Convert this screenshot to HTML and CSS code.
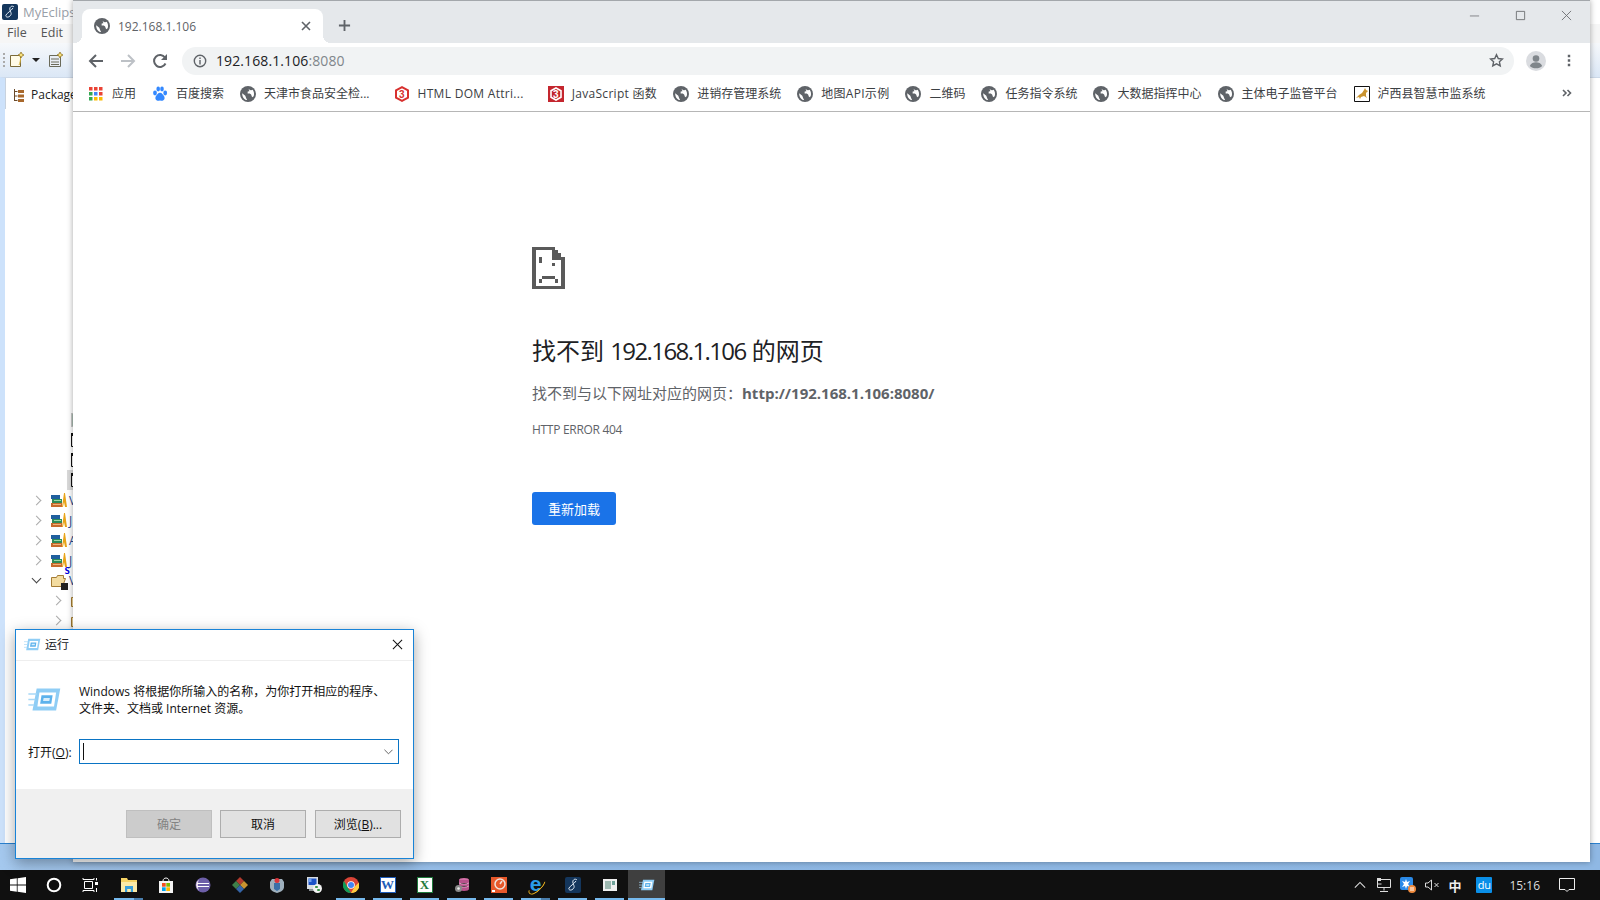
FILE: index.html
```html
<!DOCTYPE html>
<html lang="zh-CN">
  <head>
    <meta charset="UTF-8" />
    <title>192.168.1.106</title>
    <link rel="stylesheet" href="styles.css">
  </head>
  <body>
    <svg class="sprite" xmlns="http://www.w3.org/2000/svg">
      <symbol id="globe" viewBox="0 0 16 16">
        <circle cx="8" cy="8" r="8" fill="#5f6368"/>
        <path fill="#fff" d="M2.200 7.200L5.300 9.800l.9 2.500.9 1.800C4.300 13.800 2 10.800 2.200 7.200zM8.600 2.800c.8.900 1.100 1.500 2.600 1.400l1.500-.5c1.300 1.700 1.700 4 1 6.600l-1.600.9-1-2.800-1.300-.9H7.600l.1-1.900 1.700-.4z"/>
      </symbol>
      <symbol id="books" viewBox="0 0 16 16">
        <path fill="#c96a2c" d="M0 11h11v4H0z"/>
        <path fill="#f0b27a" d="M2 12h8v1H2z"/>
        <path fill="#2e8b57" d="M1 7h10v4H1z"/>
        <path fill="#9fd8a8" d="M3 8h7v1H3z"/>
        <path fill="#1f5f9e" d="M0 3h9v4H0z"/>
        <path fill="#e8a317" d="M11 15l2-14 1 0 2 14h-2l-1-5-1 5z"/>
      </symbol>
      <symbol id="folder" viewBox="0 0 16 16">
        <path fill="#f3dca0" stroke="#a57c34" d="M.5 5.500h5l1-2h6v3h2l-3 8h-11z"/>
      </symbol>
      <symbol id="file-dark" viewBox="0 0 10 16">
        <path fill="#fff" stroke="#111" d="M.5 1.500h9v13h-9z"/>
        <path fill="#111" d="M0 1h10v3H0zM2 6h2v2H2zM5 6h3v2H5zM2 9h2v2H2zM5 9h3v2H5zM2 12h2v2H2zM5 12h3v2H5z"/>
      </symbol>
      <symbol id="run-app" viewBox="0 0 24 18">
        <path fill="#8fcdf5" d="M6 1h17l-3 16H3z"/>
        <path fill="#fff" d="M8 4h12l-1.500 10H6.500z"/>
        <path fill="#5cb2ec" d="M9.500 6h8l-1 6h-8z"/>
        <path fill="#d8eefc" d="M11 8h4.500l-.4 2h-4.500z"/>
        <path stroke="#a8d8f6" d="M0 5h6M0 9h5M0 13h4"/>
      </symbol>
    </svg>

    <div class="desktop">
      <div class="window-eclipse">
        <div class="eclipse-title">
          <svg class="logo-myeclipse" viewBox="0 0 16 16"><rect width="16" height="16" rx="2" fill="#14365c"/><path fill="none" stroke="#dfe9f4" d="M12 3c-2-2-5 0-4 3s2 4 0 6-5 1-4-1 5-4 7-7"/></svg>
          <span>MyEclips</span>
        </div>
        <div class="eclipse-menu"><span>File</span><span>Edit</span></div>
        <div class="eclipse-toolbar">
          <span class="grip"></span>
          <svg class="tool-icon" viewBox="0 0 16 16"><path fill="#fffbe8" stroke="#7a6a3a" d="M1.500 3.500h10v11h-10z"/><path fill="none" stroke="#d8b23a" d="M10 13c1-2 1.500-4 1.500-7"/><path fill="#f8e27a" stroke="#8a6a1a" stroke-width=".7" d="M12 0l1 2 2 1-2 1-1 2-1-2-2-1 2-1z"/></svg>
          <span class="drop-arrow"></span>
          <svg class="tool-icon" viewBox="0 0 16 16"><path fill="#e9eef5" stroke="#6a6a5a" d="M1.500 3.500h11v11h-11z"/><path stroke="#6a6a5a" d="M3 7h8M3 10h8M3 12.500h8"/><path fill="#f8e27a" stroke="#8a6a1a" stroke-width=".7" d="M12 0l1 2 2 1-2 1-1 2-1-2-2-1 2-1z"/></svg>
        </div>
        <div class="explorer">
          <div class="explorer-tab">
            <svg class="tab-icon" viewBox="0 0 14 14"><path fill="none" stroke="#6a4a2a" d="M2.500 1v12M2.500 3.500h3M2.500 8h3M2.500 12.500h3"/><path fill="#a8682c" d="M6 2h6v3H6zM6 6.500h6v3H6zM6 11h6v3H6z"/></svg>
            <span>Package</span>
          </div>
          <ul class="tree">
            <li class="row"><span class="leaf-box"></span></li>
            <li class="row"><svg class="leaf-file" viewBox="0 0 10 16"><use href="#file-dark"/></svg></li>
            <li class="row"><svg class="leaf-file" viewBox="0 0 10 16"><use href="#file-dark"/></svg></li>
            <li class="row selected"><svg class="leaf-file" viewBox="0 0 10 16"><use href="#file-dark"/></svg></li>
            <li class="row top"><span class="chev"></span><svg class="tree-icon"><use href="#books"/></svg><span class="label">V</span></li>
            <li class="row top"><span class="chev"></span><svg class="tree-icon"><use href="#books"/></svg><span class="label">J</span></li>
            <li class="row top"><span class="chev"></span><svg class="tree-icon"><use href="#books"/></svg><span class="label">A</span></li>
            <li class="row top"><span class="chev"></span><svg class="tree-icon"><use href="#books"/></svg><span class="label">J</span></li>
            <li class="row top"><span class="chev open"></span>
              <span class="web-icon"><svg class="tree-icon"><use href="#folder"/></svg><b class="s-mark">S</b><i class="dark-mark"></i></span><span class="label">V</span></li>
            <li class="row sub"><span class="chev"></span><svg class="tree-icon"><use href="#folder"/></svg></li>
            <li class="row sub"><span class="chev"></span><svg class="tree-icon"><use href="#folder"/></svg></li>
          </ul>
        </div>
      </div>

      <div class="window-chrome">
        <div class="tabstrip">
          <div class="tab">
            <svg class="fav"><use href="#globe"/></svg>
            <span class="tab-title">192.168.1.106</span>
            <svg class="tab-close" viewBox="0 0 10 10"><path stroke="#5f6368" stroke-width="1.600" d="M1 1l8 8M9 1l-8 8"/></svg>
          </div>
          <svg class="new-tab" viewBox="0 0 14 14"><path stroke="#5f6368" stroke-width="2" d="M7 1v12M1 7h12"/></svg>
          <div class="win-controls">
            <svg viewBox="0 0 12 12"><path stroke="#7d7f82" d="M1 6.500h10"/></svg>
            <svg viewBox="0 0 12 12"><path fill="none" stroke="#6f7174" d="M1.500 1.500h9v9h-9z"/></svg>
            <svg viewBox="0 0 12 12"><path stroke="#6f7174" d="M1 1l10 10M11 1L1 11"/></svg>
          </div>
        </div>
        <div class="toolbar">
          <svg class="nav-btn" viewBox="0 0 16 16"><path fill="none" stroke="#5f6368" stroke-width="2" d="M15 8H2M8 2L2 8l6 6"/></svg>
          <svg class="nav-btn" viewBox="0 0 16 16"><path fill="none" stroke="#bdc1c6" stroke-width="2" d="M1 8h13M8 2l6 6-6 6"/></svg>
          <svg class="nav-btn" viewBox="0 0 16 16"><path fill="none" stroke="#5f6368" stroke-width="2" d="M13.500 10.500A6 6 0 1 1 13 4.500"/><path fill="#5f6368" d="M15 1v6H9z"/></svg>
          <div class="omnibox">
            <svg class="info" viewBox="0 0 14 14"><circle cx="7" cy="7" r="5.700" fill="none" stroke="#5f6368" stroke-width="1.400"/><path fill="#5f6368" d="M6.300 6h1.400v4.500H6.300zM6.300 3.500h1.400v1.400H6.300z"/></svg>
            <span class="url">192.168.1.106<span class="url-port">:8080</span></span>
            <svg class="star" viewBox="0 0 16 16"><path fill="none" stroke="#5f6368" stroke-width="1.500" d="M8 1.800l1.900 4.100 4.500.5-3.300 3 .9 4.400L8 11.600l-4 2.200.9-4.400-3.300-3 4.500-.5z"/></svg>
          </div>
          <svg class="avatar" viewBox="0 0 20 20"><circle cx="10" cy="10" r="10" fill="#dadce0"/><circle cx="10" cy="7.500" r="3.300" fill="#80868b"/><path fill="#80868b" d="M3.800 15c1-2.800 3.800-3.700 6.200-3.700s5.200.9 6.200 3.700c-1.500 1.400-3.700 2.300-6.200 2.300s-4.700-.9-6.200-2.300z"/></svg>
          <svg class="menu-dots" viewBox="0 0 4 16"><path fill="#5f6368" d="M.5 1h3v3h-3zM.5 6.500h3v3h-3zM.5 12h3v3h-3z"/></svg>
        </div>
        <div class="bookmarks">
          <a class="mark">
            <svg class="fav" viewBox="0 0 16 16"><path fill="#ea4335" d="M1 1h3.500v3.500H1zM6 1h3.500v3.500H6zM11 1h3.500v3.500H11zM11 6h3.500v3.500H11z"/><path fill="#34a853" d="M1 6h3.500v3.500H1zM1 11h3.500v3.500H1z"/><path fill="#4285f4" d="M6 6h3.500v3.500H6z"/><path fill="#fbbc04" d="M6 11h3.500v3.500H6zM11 11h3.500v3.500H11z"/></svg>
            应用
          </a>
          <a class="mark">
            <svg class="fav" viewBox="0 0 16 16"><g fill="#3388ff"><ellipse cx="3" cy="7" rx="1.900" ry="2.400"/><ellipse cx="6.200" cy="3" rx="1.800" ry="2.400"/><ellipse cx="10" cy="3" rx="1.800" ry="2.400"/><ellipse cx="13.200" cy="7" rx="1.900" ry="2.400"/><path d="M8 6.800c2 0 3 2 4 3.300 1.200 1.700.6 4.600-1.700 4.600-1 0-1.500-.3-2.300-.3s-1.300.3-2.300.3c-2.300 0-2.900-2.900-1.700-4.600 1-1.300 2-3.300 4-3.300z"/></g></svg>
            百度搜索
          </a>
          <a class="mark elided"><svg class="fav"><use href="#globe"/></svg>天津市食品安全检...</a>
          <a class="mark elided latin">
            <svg class="fav" viewBox="0 0 16 16"><path fill="none" stroke="#d8312f" stroke-width="2" d="M8 1.200l6 3.200v7.200l-6 3.200-6-3.200V4.400z"/><text class="logo-three" x="8" y="11.500" fill="#d8312f">3</text></svg>
            HTML DOM Attri...
          </a>
          <a class="mark latin">
            <svg class="fav" viewBox="0 0 16 16"><path fill="#c4262e" d="M0 0h16v16H0z"/><path fill="none" stroke="#fff" stroke-width="1.600" d="M8 2l5 2.700v6.600L8 14l-5-2.700V4.700z"/><text class="logo-three" x="8" y="11.500" fill="#fff">3</text></svg>
            JavaScript 函数
          </a>
          <a class="mark"><svg class="fav"><use href="#globe"/></svg>进销存管理系统</a>
          <a class="mark latin"><svg class="fav"><use href="#globe"/></svg>地图API示例</a>
          <a class="mark"><svg class="fav"><use href="#globe"/></svg>二维码</a>
          <a class="mark"><svg class="fav"><use href="#globe"/></svg>任务指令系统</a>
          <a class="mark"><svg class="fav"><use href="#globe"/></svg>大数据指挥中心</a>
          <a class="mark"><svg class="fav"><use href="#globe"/></svg>主体电子监管平台</a>
          <a class="mark">
            <svg class="fav" viewBox="0 0 16 16"><path fill="#fff" stroke="#111" d="M.5.500h15v15H.5z"/><path fill="#c9932f" d="M2 12l3-3 3-2 2-3 1-2 1 2 2 1-2 2 0 3 1 2-3-2-3 1-1 2-1-2z"/></svg>
            泸西县智慧市监系统
          </a>
          <svg class="more-marks" viewBox="0 0 10 8"><path fill="none" stroke="#5f6368" stroke-width="1.600" d="M1 1l3 3-3 3M5.500 1l3 3-3 3"/></svg>
        </div>
        <div class="page">
          <div class="error-box">
            <svg class="sad-page" viewBox="0 0 30 39" shape-rendering="crispEdges">
              <path fill="#5a5a5a" fill-rule="evenodd" d="M0 0h21v3h3v3h3v3h3v30H0zM3 3v33h24V12h-9V3z"/>
              <path fill="#5a5a5a" d="M6 9h3v6H6zM18 15h3v3h-3zM9 27h12v3H9zM6 30h3v3H6zM21 30h3v3h-3z"/>
            </svg>
            <h1>找不到 <span class="h1-host">192.168.1.106</span> 的网页</h1>
            <p class="error-desc">找不到与以下网址对应的网页：<strong>http://192.168.1.106:8080/</strong></p>
            <p class="error-code">HTTP ERROR 404</p>
            <button class="reload">重新加载</button>
          </div>
        </div>
      </div>

      <div class="dialog">
        <div class="dialog-title">
          <svg class="dialog-icon"><use href="#run-app"/></svg>
          <span>运行</span>
          <svg class="dialog-close" viewBox="0 0 12 12"><path stroke="#111" stroke-width="1.100" d="M1 1l10 10M11 1L1 11"/></svg>
        </div>
        <div class="dialog-body">
          <div class="dialog-msg">
            <svg class="dialog-art"><use href="#run-app"/></svg>
            <p>Windows 将根据你所输入的名称，为你打开相应的程序、<br>文件夹、文档或 Internet 资源。</p>
          </div>
          <div class="open-row">
            <label>打开(<u>O</u>):</label>
            <div class="open-input">
              <span class="caret"></span>
              <svg class="combo-arrow" viewBox="0 0 10 6"><path fill="none" stroke="#555" d="M.5.500L5 5 9.500.5"/></svg>
            </div>
          </div>
        </div>
        <div class="dialog-foot">
          <button class="win-btn" disabled>确定</button>
          <button class="win-btn">取消</button>
          <button class="win-btn browse">浏览(<u>B</u>)...</button>
        </div>
      </div>
    </div>

    <div class="taskbar">
      <div class="sys-btn">
        <svg viewBox="0 0 16 16"><path fill="#fff" d="M0 2.300l6.800-1v6.200H0zM7.600 1.200L16 0v7.500H7.600zM0 8.400h6.800v6.300L0 13.700zM7.600 8.400H16V16l-8.400-1.200z"/></svg>
      </div>
      <div class="sys-btn">
        <svg viewBox="0 0 16 16"><circle cx="8" cy="8" r="6.300" fill="none" stroke="#fff" stroke-width="2"/></svg>
      </div>
      <div class="sys-btn">
        <svg viewBox="0 0 16 16"><path fill="none" stroke="#fff" d="M1 1v1.500h11V1M2.500 4.500h8v7h-8zM1 15v-1.500h11V15M14.500 1v2.500M14.500 11v4"/><path fill="#fff" d="M13 5h3v3h-3z"/></svg>
      </div>
      <div class="task-gap"></div>
      <div class="app running stacked">
        <svg viewBox="0 0 16 16"><path fill="#f6d365" d="M0 1h6l1 2h9v12H0z"/><path fill="#fbeaa8" d="M0 5h16v10H0z"/><path fill="#3aa0dc" d="M4 9h8v6H9.800v-3H6.200v3H4z"/></svg>
      </div>
      <div class="app">
        <svg viewBox="0 0 16 16"><path fill="#f4f4f4" d="M1 4h14v12H1z"/><path fill="none" stroke="#f4f4f4" d="M5 4c0-4 6-4 6 0"/><path fill="#f25022" d="M4 6h3.700v3.700H4z"/><path fill="#7fba00" d="M8.300 6H12v3.700H8.300z"/><path fill="#00a4ef" d="M4 10.300h3.700V14H4z"/><path fill="#ffb900" d="M8.300 10.300H12V14H8.300z"/></svg>
      </div>
      <div class="app">
        <svg viewBox="0 0 16 16"><circle cx="8" cy="8" r="7.500" fill="#6d5fa8"/><path fill="#e8d8ea" d="M1 8a7 7 0 0 1 3-5.500A9 9 0 0 0 3 8a9 9 0 0 0 1 5.500A7 7 0 0 1 1 8z"/><path stroke="#fff" d="M2 6.500h12M2 9.500h12"/></svg>
      </div>
      <div class="app">
        <svg viewBox="0 0 16 16"><path fill="#b23a2e" d="M8 0l4 4-4 4-4-4z"/><path fill="#c9932f" d="M12 4l4 4-4 4-4-4z"/><path fill="#3f7f4a" d="M4 4l4 4-4 4-4-4z"/><path fill="#3565a8" d="M8 8l4 4-4 4-4-4z"/></svg>
      </div>
      <div class="app">
        <svg viewBox="0 0 16 16"><path fill="#9fb0bd" d="M3 2h10l2 3v5c0 3-3 5-7 6-4-1-7-3-7-6V5z"/><path fill="#3a6fa8" d="M5 6h6v6l-3 2-3-2z"/><circle cx="8" cy="3.500" r="2.500" fill="#d8343a"/></svg>
      </div>
      <div class="app">
        <svg viewBox="0 0 16 16"><path fill="#d8dde2" d="M1 0h11v12H1z"/><path fill="#1c52c8" d="M2.500 1.500h8V8h-8z"/><path fill="#6fa0f0" d="M2.500 1.500h3V5h-3z"/><path fill="#8a8f94" d="M3 12h7v2H3z"/><circle cx="11.500" cy="11.500" r="4.500" fill="#f3f3f3"/><path stroke="#2c8c3c" stroke-width="1.400" d="M9 10h2M12 13h2M11 9v2M12 12v2"/></svg>
      </div>
      <div class="app running">
        <svg viewBox="0 0 16 16"><circle cx="8" cy="8" r="8" fill="#db4437"/><path fill="#0f9d58" d="M8 16a8 8 0 0 1-7-12l4 7 3 5z"/><path fill="#ffcd40" d="M8 16l3.700-6.500L16 5.500A8 8 0 0 1 8 16z"/><circle cx="8" cy="8" r="3.800" fill="#fff"/><circle cx="8" cy="8" r="3" fill="#4285f4"/></svg>
      </div>
      <div class="app running">
        <span class="doc-word">W</span>
      </div>
      <div class="app running">
        <span class="doc-excel">X</span>
      </div>
      <div class="app running">
        <svg viewBox="0 0 16 16"><ellipse cx="10" cy="3" rx="5" ry="2" fill="#d46fa8"/><path fill="#b8528c" d="M5 3h10v9c0 1-2 2-5 2s-5-1-5-2z"/><path stroke="#e8a8cc" d="M5 6c2 1.500 8 1.500 10 0M5 9c2 1.500 8 1.500 10 0"/><circle cx="4.500" cy="11.500" r="3.500" fill="#8a8a8a"/><circle cx="4.500" cy="11.500" r="1.300" fill="#eee"/></svg>
      </div>
      <div class="app running">
        <svg viewBox="0 0 16 16"><path fill="#e8582a" d="M0 0h16v16H0z"/><circle cx="9" cy="7" r="5" fill="none" stroke="#f0e4de" stroke-width="1.500"/><path stroke="#f0e4de" stroke-width="1.500" d="M9 7l2-3"/><path fill="#fff" d="M1 13h3v2H1z"/></svg>
      </div>
      <div class="app running stacked">
        <span class="logo-ie">e</span>
      </div>
      <div class="app running">
        <svg viewBox="0 0 16 16"><rect width="16" height="16" rx="2" fill="#14365c"/><path fill="none" stroke="#dfe9f4" d="M12 3c-2-2-5 0-4 3s2 4 0 6-5 1-4-1 5-4 7-7"/></svg>
      </div>
      <div class="app running">
        <svg viewBox="0 0 16 16"><path fill="#f0f0f0" d="M1 2h14v12H1z"/><path fill="#9db8b0" d="M3 4h6v8H3z"/><path fill="#6fa39a" d="M10 4h3v4h-3z"/></svg>
      </div>
      <div class="app running active">
        <svg><use href="#run-app"/></svg>
      </div>
      <div class="tray">
        <svg class="tray-icon" viewBox="0 0 14 14"><path fill="none" stroke="#ddd" stroke-width="1.300" d="M1 10l6-6 6 6"/></svg>
        <svg class="tray-icon wide" viewBox="0 0 16 16"><path fill="none" stroke="#ddd" d="M1.500 2.500h13v8h-13zM8 10.500v3M4 14.500h8M1.500 7h4"/><path fill="#ddd" d="M1 1h4v3H1z"/></svg>
        <svg class="tray-icon wide" viewBox="0 0 16 16"><rect width="13" height="13" rx="2" fill="#2a8ae8"/><path fill="#fff" d="M6 2l1 3 3-1-2 3 2 3-3-1-1 3-1-3-3 1 2-3-2-3 3 1z"/><circle cx="12" cy="12" r="4" fill="#f08a3c"/><path stroke="#fff" d="M10 11h4M10 13h4"/></svg>
        <svg class="tray-icon wide" viewBox="0 0 16 16"><path fill="none" stroke="#ddd" d="M1.500 6v4h2.500l3.500 3V3L4 6zM10.500 6l4 4M14.500 6l-4 4"/></svg>
        <span class="tray-text ime">中</span>
        <span class="du">du</span>
        <span class="clock">15:16</span>
        <svg class="notify" viewBox="0 0 16 16"><path fill="none" stroke="#eee" d="M.5 1.500h15v11H10L8 14.500 6 12.500H.5z"/></svg>
      </div>
    </div>
  </body>
</html>
```

FILE: styles.css
```css
* {
  box-sizing: border-box;
}
body {
  margin: 0;
  width: 1600px;
  height: 900px;
  overflow: hidden;
  display: flex;
  flex-direction: column;
  font-family: "Open Sans", "Noto Sans CJK SC", sans-serif;
  font-size: 12px;
  color: #202124;
}
svg {
  flex-shrink: 0;
  display: block;
}
.sprite {
  display: none;
}

/* desktop + windows */
.desktop {
  position: relative;
  flex: 1;
  background: linear-gradient(90deg, #a5c9ef, #8db6e2 40%, #8fb8e4);
}
.window-eclipse {
  position: absolute;
  left: 0;
  top: 0;
  width: 1600px;
  height: 844px;
  display: flex;
  flex-direction: column;
  background: #f2f5f9;
  border-bottom: 1px solid #2b82d0;
}
.eclipse-title {
  height: 24px;
  display: flex;
  align-items: center;
  gap: 5px;
  padding-left: 2px;
  font-size: 13px;
  color: #99a0a8;
  background: #fff;
}
.logo-myeclipse {
  width: 16px;
  height: 16px;
}
.eclipse-menu {
  height: 19px;
  display: flex;
  gap: 14px;
  padding-left: 7px;
  font-size: 12.500px;
  color: #555;
  background: #f6f6f6;
}
.eclipse-toolbar {
  height: 34px;
  display: flex;
  align-items: center;
  padding-left: 3px;
  background: linear-gradient(#f6f8fb, #dbe7f6);
}
.grip {
  width: 2px;
  height: 14px;
  margin-right: 4px;
  border-left: 2px dotted #aaa;
}
.tool-icon {
  width: 16px;
  height: 16px;
}
.drop-arrow {
  width: 0;
  height: 0;
  margin: 0 8px 0 7px;
  border: 4px solid transparent;
  border-top: 4px solid #222;
  border-bottom: 0;
}
.explorer {
  flex: 1;
  border-left: 5px solid #cde2fb;
  background: #fff;
  border-top: 1px solid #cdd9e8;
}
.explorer-tab {
  height: 31px;
  display: flex;
  align-items: center;
  gap: 5px;
  padding: 2px 0 0 6px;
  font-size: 12px;
  color: #222;
  border-left: 1px solid #c8d2de;
}
.tab-icon {
  width: 14px;
  height: 14px;
}
.tree {
  list-style: none;
  width: 68px;
  overflow: hidden;
  margin: 0;
  padding: 301px 0 0 0;
}
.row {
  height: 20px;
  display: flex;
  align-items: center;
  white-space: nowrap;
  padding-left: 66px;
}
.row.selected {
  padding-left: 62px;
  background: linear-gradient(90deg, transparent 62px, #d9d9d9 62px);
}
.row.selected .leaf-file {
  margin-left: 4px;
}
.row.top {
  padding-left: 28px;
}
.row.sub {
  padding-left: 48px;
}
.leaf-box {
  flex-shrink: 0;
  width: 8px;
  height: 14px;
  background: #a9bcb2;
  border: 1px solid #c8c8c8;
}
.leaf-file {
  width: 10px;
  height: 16px;
}
.chev {
  flex-shrink: 0;
  width: 7px;
  height: 7px;
  margin-right: 11px;
  border-top: 1.500px solid #aaa;
  border-right: 1.500px solid #aaa;
  transform: rotate(45deg);
}
.chev.open {
  border-color: #444;
  transform: rotate(135deg);
  margin-top: -3px;
}
.tree-icon {
  width: 16px;
  height: 16px;
}
.label {
  flex-shrink: 0;
  margin-left: 2px;
  font-size: 12px;
  color: #2a4a90;
}
.web-icon {
  position: relative;
  display: block;
  flex-shrink: 0;
  width: 16px;
  height: 16px;
}
.s-mark {
  position: absolute;
  right: -3px;
  top: -6px;
  font: bold 9px "DejaVu Sans Mono", monospace;
  color: #0000e0;
}
.dark-mark {
  position: absolute;
  right: -1px;
  bottom: -2px;
  width: 7px;
  height: 7px;
  background: #222;
}

/* chrome window */
.window-chrome {
  position: absolute;
  left: 73px;
  top: 0;
  width: 1517px;
  height: 862px;
  display: flex;
  flex-direction: column;
  background: #fff;
  box-shadow: 0 0 6px rgba(0, 0, 0, 0.35);
}
.tabstrip {
  height: 43px;
  display: flex;
  align-items: flex-end;
  background: #e5e8eb;
  border-top: 1px solid #a3a7ab;
}
.tab {
  position: relative;
  width: 241px;
  height: 34px;
  margin-left: 9px;
  display: flex;
  align-items: center;
  padding-left: 12px;
  background: #fff;
  border-radius: 8px 8px 0 0;
}
.tab::before,
.tab::after {
  content: "";
  position: absolute;
  bottom: 0;
  width: 8px;
  height: 8px;
}
.tab::before {
  left: -8px;
  background: radial-gradient(circle at 0 0, transparent 8px, #fff 8px);
}
.tab::after {
  right: -8px;
  background: radial-gradient(circle at 100% 0, transparent 8px, #fff 8px);
}
.fav {
  width: 16px;
  height: 16px;
}
.tab-title {
  margin-left: 8px;
  flex: 1;
  font-size: 12px;
  color: #5f6368;
}
.tab-close {
  width: 10px;
  height: 10px;
  margin-right: 12px;
}
.new-tab {
  width: 13px;
  height: 13px;
  margin: 0 0 11px 15px;
}
.win-controls {
  margin-left: auto;
  align-self: flex-start;
  display: flex;
  gap: 35px;
  padding: 9px 18px 0 0;
}
.win-controls svg {
  width: 11px;
  height: 11px;
}
.toolbar {
  height: 35px;
  display: flex;
  align-items: center;
  padding-left: 15px;
}
.nav-btn {
  width: 16px;
  height: 16px;
  margin-right: 16px;
}
.nav-btn + .omnibox {
  margin-left: -2px;
}
.omnibox {
  width: 1332px;
  height: 28px;
  display: flex;
  align-items: center;
  padding: 0 10px 0 11px;
  background: #f1f3f4;
  border-radius: 14px;
}
.info {
  width: 14px;
  height: 14px;
}
.url {
  margin-left: 9px;
  font-size: 14px;
  letter-spacing: 0.1px;
  color: #202124;
}
.url-port {
  color: #80868b;
}
.star {
  width: 15px;
  height: 15px;
  margin-left: auto;
}
.avatar {
  width: 20px;
  height: 20px;
  margin-left: 12px;
}
.menu-dots {
  width: 4px;
  height: 13px;
  margin-left: 21px;
}
.bookmarks {
  height: 34px;
  display: flex;
  align-items: center;
  padding: 0 0 2px 15px;
  gap: 16px;
  border-bottom: 1px solid #b6b6b6;
  white-space: nowrap;
}
.mark {
  display: flex;
  align-items: center;
  gap: 8px;
  font-size: 12px;
  line-height: 16px;
  color: #3c4043;
}
.mark.elided {
  margin-right: 8px;
}
.mark.latin {
  letter-spacing: 0.3px;
}
.logo-three {
  font: bold 10px "Liberation Sans", sans-serif;
  text-anchor: middle;
}
.more-marks {
  position: absolute;
  right: 18px;
  top: 89px;
  width: 10px;
  height: 8px;
}
.page {
  flex: 1;
  padding: 135px 0 0 459px;
}
.error-box {
  width: 600px;
}
.sad-page {
  width: 33px;
  height: 42px;
  margin-bottom: 46px;
}
h1 {
  margin: 0 0 15px;
  font-size: 24px;
  font-weight: 400;
  line-height: 32px;
  color: #202124;
}
.h1-host {
  letter-spacing: -1.600px;
}
.error-desc {
  margin: 0 0 17px;
  font-size: 15px;
  line-height: 22px;
  color: #5f6368;
}
.error-desc strong {
  color: #5f6368;
}
.error-code {
  margin: 0 0 53px;
  font-size: 12px;
  line-height: 18px;
  letter-spacing: -0.3px;
  color: #5f6368;
}
.reload {
  width: 84px;
  height: 33px;
  padding: 0;
  border: 0;
  border-radius: 3px;
  background: #1a73e8;
  color: #fff;
  font: 13px "Open Sans", "Noto Sans CJK SC", sans-serif;
}

/* run dialog */
.dialog {
  position: absolute;
  left: 15px;
  top: 629px;
  width: 399px;
  height: 230px;
  display: flex;
  flex-direction: column;
  background: #fff;
  border: 1px solid #1883d7;
  box-shadow: 0 4px 14px rgba(0, 0, 0, 0.35);
}
.dialog-title {
  height: 31px;
  display: flex;
  align-items: center;
  gap: 4px;
  padding: 0 8px 2px;
  font-size: 12px;
  border-bottom: 1px solid #eeeeee;
}
.dialog-icon {
  width: 17px;
  height: 13px;
}
.dialog-close {
  width: 11px;
  height: 11px;
  margin-left: auto;
  margin-right: 2px;
}
.dialog-body {
  flex: 1;
  padding: 22px 14px 0 12px;
}
.dialog-msg {
  display: flex;
  gap: 17px;
  height: 46px;
}
.dialog-art {
  width: 34px;
  height: 25px;
  margin-top: 4px;
}
.dialog-msg p {
  margin: 0;
  font-size: 12px;
  line-height: 17px;
  color: #111;
}
.open-row {
  display: flex;
  align-items: center;
  gap: 7px;
  margin-top: 10px;
}
.open-row label {
  font-size: 12px;
  color: #111;
}
.open-input {
  width: 320px;
  height: 25px;
  display: flex;
  align-items: center;
  justify-content: space-between;
  padding: 0 5px 0 3px;
  border: 1px solid #0a74c4;
}
.caret {
  width: 1px;
  height: 17px;
  background: #111;
}
.combo-arrow {
  width: 9px;
  height: 6px;
}
.dialog-foot {
  height: 69px;
  display: flex;
  justify-content: flex-end;
  gap: 8px;
  padding: 21px 12px 0 0;
  background: #f0f0f0;
}
.win-btn {
  width: 86px;
  height: 28px;
  padding: 0;
  border: 1px solid #adadad;
  background: #e1e1e1;
  color: #111;
  font: 12px "Open Sans", "Noto Sans CJK SC", sans-serif;
}
.win-btn.browse {
  margin-left: 1px;
}
.win-btn:disabled {
  background: #cccccc;
  border-color: #bfbfbf;
  color: #838383;
}

/* taskbar */
.taskbar {
  height: 30px;
  display: flex;
  background: #101010;
  color: #fff;
}
.sys-btn {
  width: 36px;
  display: flex;
  align-items: center;
  justify-content: center;
}
.sys-btn svg {
  width: 16px;
  height: 16px;
}
.task-gap {
  width: 2px;
}
.app {
  position: relative;
  width: 37px;
  display: flex;
  align-items: center;
  justify-content: center;
}
.app svg {
  width: 16px;
  height: 16px;
}
.running::after {
  content: "";
  position: absolute;
  left: 4px;
  right: 4px;
  bottom: 0;
  height: 2px;
  background: #76b9ed;
}
.stacked::after {
  background: linear-gradient(90deg, #76b9ed 70%, #4a7fae 70%);
}
.active {
  background: #3f3f3f;
}
.active::after {
  left: 0;
  right: 0;
}
.doc-word,
.doc-excel {
  width: 16px;
  height: 16px;
  font: bold 13px/14px "Liberation Serif", serif;
  text-align: center;
  background: #fff;
}
.doc-word {
  color: #1f5cb8;
  border: 1px solid #1f5cb8;
}
.doc-excel {
  color: #1f7a3c;
  border: 1px solid #1f7a3c;
}
.logo-ie {
  position: relative;
  width: 16px;
  height: 20px;
  font: bold 21px/18px "Liberation Sans", sans-serif;
  text-align: center;
  color: #2a9be8;
}
.logo-ie::after {
  content: "";
  position: absolute;
  left: -2px;
  top: 6px;
  width: 20px;
  height: 8px;
  border: 1.500px solid #f2b71f;
  border-color: transparent transparent #f2b71f #f2b71f;
  border-radius: 50%;
  transform: rotate(-45deg);
}
.tray {
  margin-left: auto;
  display: flex;
  align-items: center;
  padding-right: 25px;
  color: #eee;
}
.tray .tray-icon {
  width: 12px;
  height: 12px;
  margin-right: 10px;
}
.tray .tray-icon.wide {
  width: 16px;
  height: 16px;
  margin-right: 8px;
}
.ime {
  width: 14px;
  margin-right: 14px;
  font-size: 13px;
  font-weight: 700;
}
.du {
  width: 16px;
  height: 16px;
  font-size: 11px;
  line-height: 15px;
  text-align: center;
  background: #0a8fe8;
  color: #fff;
  border-radius: 1px;
}
.clock {
  margin: 0 19px 0 17px;
  font-size: 12px;
  color: #ddd;
}
.notify {
  width: 16px;
  height: 16px;
}
```
